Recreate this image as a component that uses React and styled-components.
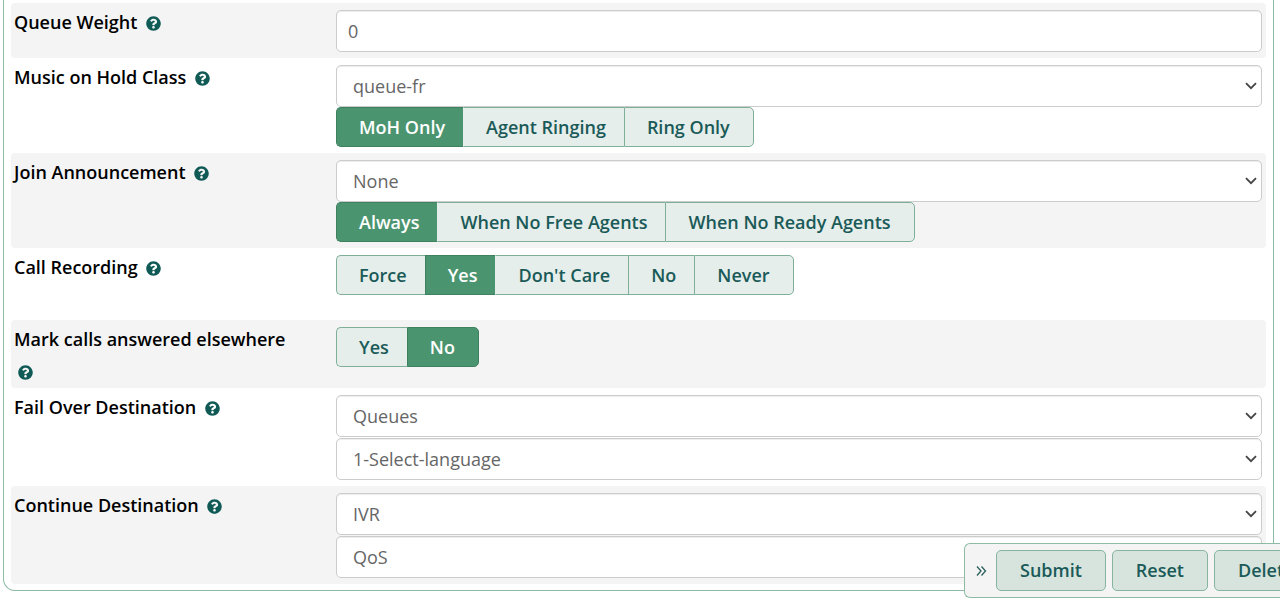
import React from 'react';
import styled, { createGlobalStyle } from 'styled-components';
import { FaQuestionCircle } from 'react-icons/fa';

const GlobalStyle = createGlobalStyle`
  *, *::before, *::after { box-sizing: border-box; }
  body {
    margin: 0;
    background: #fff;
    color: #000;
    font-family: "Open Sans", "Liberation Sans", sans-serif;
    font-size: 18px;
  }
`;

const Page = styled.main`
  padding: 0 6px 16px 3px;
`;

const Panel = styled.form`
  padding: 3px 7px 6px;
  border: 1px solid #8fbba6;
  border-top: 0;
  border-radius: 0 0 12px 12px;
`;

const Row = styled.div`
  display: grid;
  grid-template-columns: 325px minmax(0, 1fr);
  min-height: ${(p) => (p.$tall ? '72px' : '0')};
  padding-right: 4px;
  border-radius: 4px;
  background: ${(p) => (p.$shaded ? '#f4f4f4' : 'transparent')};
`;

const LabelCell = styled.div`
  padding: 3px 40px 1px 3px;
  line-height: 32px;
  font-weight: 600;
`;

const HelpIcon = styled(FaQuestionCircle)`
  width: 15px;
  height: 15px;
  margin-left: 4px;
  color: #105a56;
  vertical-align: -2px;
`;

const Controls = styled.div`
  display: flex;
  flex-direction: column;
  align-items: flex-start;
  padding: 7px 0 6px;
`;

const fieldStyle = `
  display: block;
  width: 100%;
  height: 42px;
  margin: 0;
  border: 1px solid #ccc;
  border-radius: 5px;
  background: #fff;
  color: #666;
  font: inherit;
  box-shadow: inset 0 1px 1px rgba(0, 0, 0, 0.075);
`;

const TextInput = styled.input`
  ${fieldStyle}
  padding: 0 11px;
`;

const SelectWrap = styled.div`
  position: relative;
  width: 100%;

  & + & { margin-top: 1px; }
`;

const Select = styled.select`
  ${fieldStyle}
  padding: 0 32px 0 16px;
  appearance: none;
`;

const Arrow = styled.svg`
  position: absolute;
  top: 17px;
  right: 5px;
  width: 12px;
  height: 8px;
  pointer-events: none;
`;

const Segments = styled.div`
  display: flex;
  height: 40px;
`;

const Segment = styled.label`
  position: relative;
  display: flex;
  align-items: center;
  padding: 0 18px 0 22px;
  border: 1px solid #7fae99;
  border-right-width: 0;
  background: #e5eeea;
  color: #1a5a58;
  font-weight: 600;
  white-space: nowrap;

  &:first-child { border-radius: 5px 0 0 5px; }
  &:last-child { border-radius: 0 5px 5px 0; border-right-width: 1px; padding-right: 23px; }
  &:has(input:checked) {
    border-color: #3f805f;
    background: #4b9470;
    color: #fff;
  }
  &:has(input:checked) + & { border-left-color: #e5eeea; }
`;

const Radio = styled.input`
  position: absolute;
  inset: 0;
  width: 100%;
  height: 100%;
  margin: 0;
  opacity: 0;
`;

const ActionBar = styled.div`
  position: fixed;
  right: 0;
  bottom: 9px;
  display: flex;
  align-items: center;
  gap: 6px;
  width: 316px;
  height: 55px;
  padding-left: 7px;
  border: 1px solid #8fbba6;
  border-right: 0;
  border-radius: 6px 0 0 6px;
  background: #f4f4f4;
  overflow: hidden;
`;

const Toggle = styled.button`
  display: flex;
  flex: none;
  align-items: center;
  justify-content: center;
  width: 18px;
  height: 40px;
  padding: 0;
  border: 0;
  background: none;
  color: #2b5f5c;
`;

const ActionButton = styled.button`
  flex: none;
  height: 41px;
  padding: 0 23px 2px;
  border: 1px solid #86b49f;
  border-radius: 5px;
  background: #d6e4dd;
  color: #1a5a58;
  font: inherit;
  font-weight: 600;
`;

function FormRow({ id, label, shaded, tall, group, children }) {
  return (
    <Row $shaded={shaded} $tall={tall}>
      <LabelCell>
        {group ? <span id={id}>{label}</span> : <label htmlFor={id}>{label}</label>}{' '}
        <HelpIcon aria-hidden="true" />
      </LabelCell>
      <Controls>{children}</Controls>
    </Row>
  );
}

function Dropdown({ id, value, label }) {
  return (
    <SelectWrap>
      <Select id={id} aria-label={label} defaultValue={value}>
        <option>{value}</option>
      </Select>
      <Arrow viewBox="0 0 12 8" aria-hidden="true">
        <path d="M1 1.2 6 6.2 11 1.2" fill="none" stroke="#444" strokeWidth="1.8" />
      </Arrow>
    </SelectWrap>
  );
}

function RadioGroup({ name, options, value, label, labelledBy }) {
  return (
    <Segments role="radiogroup" aria-label={label} aria-labelledby={labelledBy}>
      {options.map((option) => (
        <Segment key={option}>
          <Radio type="radio" name={name} value={option} defaultChecked={option === value} />
          {option}
        </Segment>
      ))}
    </Segments>
  );
}

export default function App() {
  return (
    <Page>
      <GlobalStyle />
      <Panel id="queue-form">
        <FormRow id="weight" label="Queue Weight" shaded>
          <TextInput id="weight" type="text" defaultValue="0" />
        </FormRow>
        <FormRow id="music" label="Music on Hold Class">
          <Dropdown id="music" value="queue-fr" />
          <RadioGroup
            name="rtone"
            label="Music on hold mode"
            options={['MoH Only', 'Agent Ringing', 'Ring Only']}
            value="MoH Only"
          />
        </FormRow>
        <FormRow id="join" label="Join Announcement" shaded>
          <Dropdown id="join" value="None" />
          <RadioGroup
            name="skip-join"
            label="Play join announcement"
            options={['Always', 'When No Free Agents', 'When No Ready Agents']}
            value="Always"
          />
        </FormRow>
        <FormRow id="recording" label="Call Recording" group tall>
          <RadioGroup
            name="recording"
            labelledBy="recording"
            options={['Force', 'Yes', "Don't Care", 'No', 'Never']}
            value="Yes"
          />
        </FormRow>
        <FormRow id="elsewhere" label="Mark calls answered elsewhere" group shaded>
          <RadioGroup name="elsewhere" labelledBy="elsewhere" options={['Yes', 'No']} value="No" />
        </FormRow>
        <FormRow id="failover" label="Fail Over Destination">
          <Dropdown id="failover" value="Queues" />
          <Dropdown id="failover-target" label="Fail over target" value="1-Select-language" />
        </FormRow>
        <FormRow id="continue" label="Continue Destination" shaded>
          <Dropdown id="continue" value="IVR" />
          <Dropdown id="continue-target" label="Continue target" value="QoS" />
        </FormRow>
      </Panel>
      <ActionBar>
        <Toggle type="button" aria-label="Collapse actions">
          <svg width="11" height="12" viewBox="0 0 11 12" fill="none" stroke="currentColor" strokeWidth="1.3">
            <path d="M1 1.5 5 6 1 10.5M5.5 1.5 9.5 6 5.5 10.5" />
          </svg>
        </Toggle>
        <ActionButton type="submit" form="queue-form">Submit</ActionButton>
        <ActionButton type="reset" form="queue-form">Reset</ActionButton>
        <ActionButton type="button">Delete</ActionButton>
      </ActionBar>
    </Page>
  );
}
